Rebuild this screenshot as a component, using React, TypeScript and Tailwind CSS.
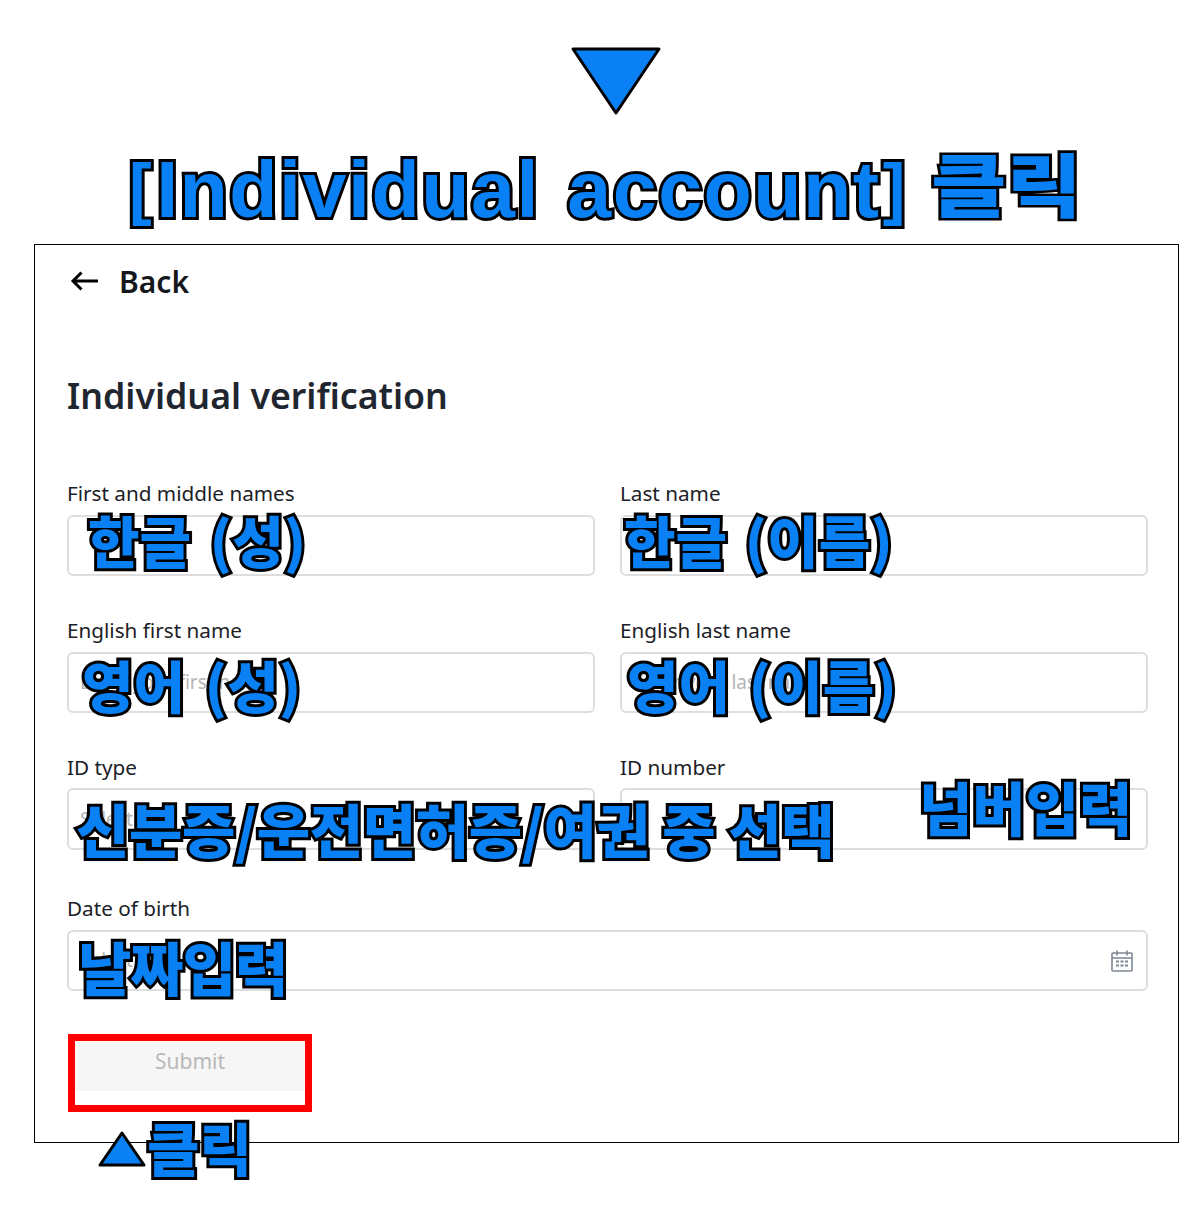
const labelFont = "[font-family:'Noto_Sans','Noto_Sans_CJK_KR',sans-serif]"

// 파란 안내 문구 (검정 외곽선)
function Callout({ children, className }: { children: React.ReactNode; className: string }) {
  return (
    <span
      className={`absolute z-10 whitespace-nowrap font-black leading-none text-[#0a80f5] [font-family:'Noto_Sans_CJK_KR',sans-serif] [-webkit-text-stroke:6px_#000] [paint-order:stroke_fill] ${className}`}
    >
      {children}
    </span>
  )
}

function Field({
  label,
  placeholder,
  children,
  h = 'h-[61px]',
  mb = 'mb-[8px]',
}: {
  label: string
  placeholder?: string
  children?: React.ReactNode
  h?: string
  mb?: string
}) {
  return (
    <div className="flex flex-col">
      <label className={`${mb} text-[20.700px] leading-[28px] text-[#1c2127] ${labelFont}`}>{label}</label>
      <div className={`relative flex items-center rounded-[6px] border-2 border-[#dedede] bg-white pl-[11px] pr-[12px] ${h}`}>
        {placeholder && <span className={`text-[19px] text-[#b5b5b5] ${labelFont}`}>{placeholder}</span>}
        {children}
      </div>
    </div>
  )
}

function CalendarIcon() {
  return (
    <svg className="ml-auto" width="24" height="24" viewBox="0 0 24 24" fill="none" stroke="#7d8794" strokeWidth="1.6">
      <rect x="2" y="4" width="20" height="18" rx="1" />
      <path d="M2 9h20M7 1.500v5M17 1.500v5" />
      <path d="M6 12.500h3M10.500 12.500h3M15 12.500h3M6 16.500h3M10.500 16.500h3M15 16.500h3" strokeWidth="2" />
    </svg>
  )
}

export default function App() {
  return (
    <div className="h-[1221px] w-[1203px] overflow-hidden bg-white">
      <div className="flex h-[244px] flex-col items-center">
        <svg className="mt-[46px] ml-[28px]" width="92" height="70" viewBox="0 0 92 70">
          <path d="M3 3h86L46 67z" fill="#0a80f5" stroke="#000" strokeWidth="3" strokeLinejoin="round" />
        </svg>
        <div className="relative mt-[34px] h-[80px] w-full">
          <Callout className="left-[129px] top-[-9px] text-[79px]">
            <span className="[font-family:'Liberation_Sans',sans-serif] [letter-spacing:1.500px] [word-spacing:4px]">
              <span className="relative top-[-5px] mr-[3px] text-[68px]">[</span>Individual account
              <span className="relative top-[-5px] ml-[2px] text-[68px]">]</span>
            </span>{' '}
            <span className="ml-[6px] inline-block scale-y-[0.85] text-[82px]">클릭</span>
          </Callout>
        </div>
      </div>

      <div className="relative ml-[34px] h-[899px] w-[1145px] border border-black pl-[32px] pr-[30px]">
        <div className="flex h-[70px] items-center pt-[2px]">
          <svg className="ml-[3px]" width="28" height="22" viewBox="0 0 28 22" fill="none" stroke="#000" strokeWidth="3">
            <path d="M28 11H3M11.500 2.500 3 11l8.500 8.500" />
          </svg>
          <span className={`ml-[21px] text-[30px] font-semibold text-[#14171c] ${labelFont}`}>Back</span>
        </div>

        <h1 className={`mt-[55px] text-[35.700px] leading-[50px] font-semibold text-[#1f2630] ${labelFont}`}>
          Individual verification
        </h1>

        <div className="mt-[59px] grid grid-cols-2 gap-x-[25px] gap-y-[40px]">
          <Field label="First and middle names">
            <Callout className="left-[19px] top-[-6px] text-[56px] [word-spacing:6px]">한글 (성)</Callout>
          </Field>
          <Field label="Last name">
            <Callout className="left-[2px] top-[-6px] text-[56px] [word-spacing:5px]">한글 (이름)</Callout>
          </Field>
          <Field label="English first name" placeholder="Enter your first name">
            <Callout className="left-[13px] top-[2px] text-[56px] [word-spacing:7px]">영어 (성)</Callout>
          </Field>
          <Field label="English last name" placeholder="Enter your last name">
            <Callout className="left-[5px] top-[2px] text-[56px] [word-spacing:6px]">영어 (이름)</Callout>
          </Field>
        </div>

        <div className="mt-[40px] grid grid-cols-2 gap-x-[25px]">
          <Field label="ID type" placeholder="Select" h="h-[62px]" mb="mb-[7px]">
            <Callout className="left-[7px] top-[9px] text-[58px] [letter-spacing:-0.400px]">신분증/운전면허증/여권 중 선택</Callout>
          </Field>
          <Field label="ID number" h="h-[62px]" mb="mb-[7px]">
            <Callout className="left-[297px] top-[-13px] text-[58px]">넘버입력</Callout>
          </Field>
        </div>

        <div className="mt-[44px]">
          <Field label="Date of birth" placeholder="Select">
            <Callout className="left-[9px] top-[5px] text-[58px] [letter-spacing:-1px]">날짜입력</Callout>
            <CalendarIcon />
          </Field>
        </div>

        {/* 버튼 + 빨간 강조 테두리 */}
        <div className="relative mt-[43px] ml-[1px] h-[78px] w-[244px] border-[7px] border-[#ff0000]">
          <div className={`flex h-[50px] items-center justify-center bg-[#f6f6f6] pb-[8px] text-[21px] text-[#b9b9b9] ${labelFont}`}>
            Submit
          </div>
        </div>

        <div className="absolute left-[62px] top-[875px] flex items-center">
          <svg width="50" height="38" viewBox="0 0 50 38">
            <path d="M25 3 47 35H3z" fill="#0a80f5" stroke="#000" strokeWidth="3" strokeLinejoin="round" />
          </svg>
          <span className="relative h-[57px] w-[110px]">
            <Callout className="left-0 top-[-2px] text-[57px]">클릭</Callout>
          </span>
        </div>
      </div>
    </div>
  )
}
